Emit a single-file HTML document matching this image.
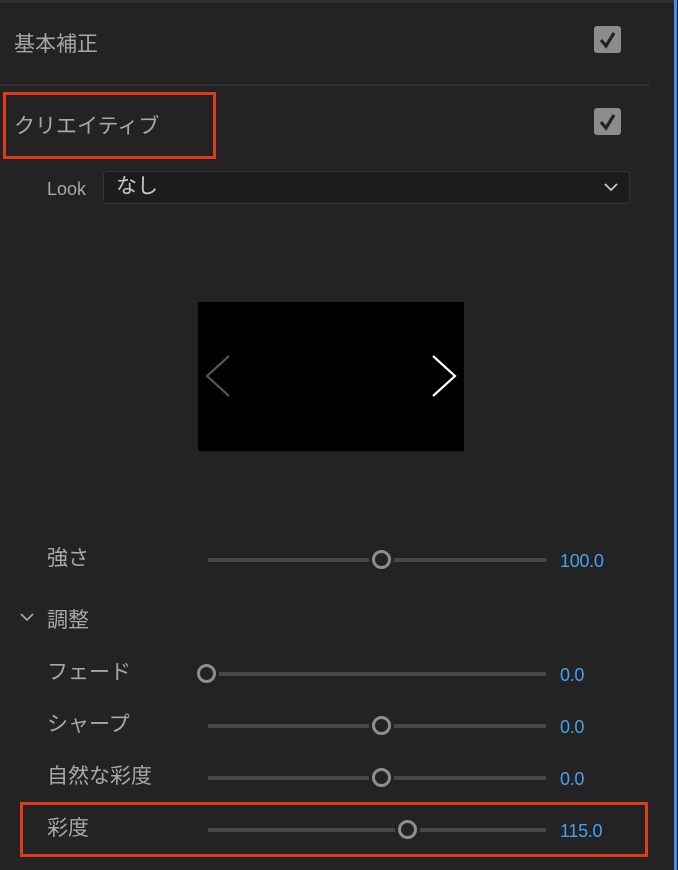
<!DOCTYPE html>
<html><head><meta charset="utf-8"><style>
*{margin:0;padding:0;box-sizing:border-box}
body{width:678px;height:870px;background:#232323;position:relative;overflow:hidden;font-family:"Liberation Sans","Noto Sans CJK JP",sans-serif;color:#a8a8a8}
.a{position:absolute}
.t{position:absolute;line-height:1;white-space:nowrap}
.cb{position:absolute;width:27px;height:27px;background:#8c8c8c;border-radius:3px}
.track{position:absolute;left:208px;width:338px;height:4px;background:#474747}
.knob{position:absolute;width:19px;height:19px;border-radius:50%;border:3px solid #8e8e8e;background:#232323;box-shadow:0 0 0 3px #232323}
.val{position:absolute;left:560px;color:#4a9ff0;font-size:18px;line-height:1;letter-spacing:-0.3px}
.lbl{position:absolute;left:47px;font-size:21px;line-height:1;color:#a8a8a8;white-space:nowrap}
</style></head><body>
<div class="a" style="left:0;top:0;width:674px;height:3px;background:#2f2f2f"></div>
<div class="a" style="left:674px;top:0;width:3px;height:870px;background:#3f8ef0"></div>
<div class="a" style="left:677px;top:0;width:1px;height:870px;background:#1a1a1a"></div>

<div class="t" style="left:14px;top:34px;font-size:21px">基本補正</div>
<div class="cb" style="left:594px;top:26px"><svg width="27" height="27"><path d="M7 14 L12 20 L20 7" stroke="#222" stroke-width="3.2" fill="none"/></svg></div>
<div class="a" style="left:0;top:84px;width:650px;height:2px;background:#2f2f2f"></div>

<div class="a" style="left:3px;top:92px;width:213px;height:67px;border:3px solid #e03a1f"></div>
<div class="t" style="left:14px;top:116px;font-size:21px">クリエイティブ</div>
<div class="cb" style="left:594px;top:108px"><svg width="27" height="27"><path d="M7 14 L12 20 L20 7" stroke="#222" stroke-width="3.2" fill="none"/></svg></div>

<div class="t" style="left:47px;top:180px;font-size:18px">Look</div>
<div class="a" style="left:103px;top:171px;width:527px;height:33px;background:#1c1c1c;border:1px solid #333;border-radius:4px"></div>
<div class="t" style="left:116px;top:176px;font-size:21px;color:#c8c8c8">なし</div>
<svg class="a" style="left:603px;top:182px" width="16" height="10"><path d="M2 2 L8 8 L14 2" stroke="#c8c8c8" stroke-width="1.8" fill="none"/></svg>

<div class="a" style="left:198px;top:302px;width:266px;height:149px;background:#000"></div>
<svg class="a" style="left:198px;top:302px" width="266" height="149"><path d="M31 54 L9 74 L31 94" stroke="#555" stroke-width="2.2" fill="none"/><path d="M235 54 L257 74 L235 94" stroke="#fff" stroke-width="2.2" fill="none"/></svg>

<div class="lbl" style="top:548px">強さ</div>
<div class="track" style="top:558px"></div>
<div class="knob" style="left:372px;top:550px"></div>
<div class="val" style="top:552px">100.0</div>

<svg class="a" style="left:20px;top:612px" width="14" height="10"><path d="M1 2 L7 8 L13 2" stroke="#a8a8a8" stroke-width="1.6" fill="none"/></svg>
<div class="lbl" style="top:610px">調整</div>

<div class="lbl" style="top:662px">フェード</div>
<div class="track" style="top:672px"></div>
<div class="knob" style="left:197px;top:664px"></div>
<div class="val" style="top:666px">0.0</div>

<div class="lbl" style="top:714px">シャープ</div>
<div class="track" style="top:724px"></div>
<div class="knob" style="left:372px;top:716px"></div>
<div class="val" style="top:718px">0.0</div>

<div class="lbl" style="top:766px">自然な彩度</div>
<div class="track" style="top:776px"></div>
<div class="knob" style="left:372px;top:768px"></div>
<div class="val" style="top:770px">0.0</div>

<div class="a" style="left:20px;top:802px;width:628px;height:55px;border:3px solid #e03a1f"></div>
<div class="lbl" style="top:818px">彩度</div>
<div class="track" style="top:828px"></div>
<div class="knob" style="left:398px;top:820px"></div>
<div class="val" style="top:822px">115.0</div>
</body></html>
